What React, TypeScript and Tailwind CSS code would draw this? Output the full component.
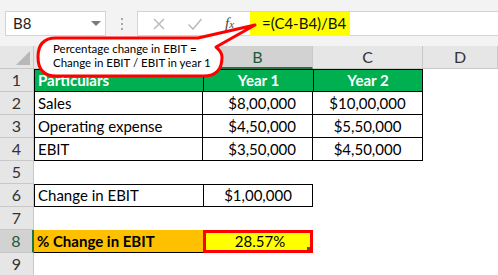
import React from "react";

const font = { fontFamily: "Lato, 'Open Sans', sans-serif" };

// column A's letter sits under the callout, so it is left blank
const cols = ["", "B", "C", "D"];

export default function App() {
  return (
    <div className="relative w-[498px] h-[275px] overflow-hidden bg-white text-black" style={font}>
      {/* formula bar */}
      <div className="flex h-[46px] items-center bg-[#f3f3f3] pl-[5px] pt-[1px]">
        <div className="flex h-[25px] w-[101px] items-center justify-between border border-[#d4d4d4] bg-white pl-[7px] pr-[4px] text-[15px] text-[#222]">
          <span>B8</span>
          <svg width="10" height="6" viewBox="0 0 10 6">
            <path d="M0 0 L10 0 L5 5 Z" fill="#7a7a7a" />
          </svg>
        </div>
        <div className="flex w-[31px] flex-col items-center gap-[3px]">
          <span className="h-[2px] w-[2px] bg-[#a8a8a8]" />
          <span className="h-[2px] w-[2px] bg-[#a8a8a8]" />
          <span className="h-[2px] w-[2px] bg-[#a8a8a8]" />
        </div>
        <div className="flex h-[25px] flex-1 items-center border border-r-0 border-[#d4d4d4] bg-white">
          <div className="flex w-[112px] items-center pl-[14px]">
            <svg width="14" height="14" viewBox="0 0 14 14" className="mr-[21px]">
              <path d="M2 2 L12 12 M12 2 L2 12" stroke="#bdbdbd" strokeWidth="1.6" />
            </svg>
            <svg width="16" height="14" viewBox="0 0 16 14" className="mr-[22px]">
              <path d="M1.5 7.5 L6 12 L14.5 2" stroke="#bdbdbd" strokeWidth="1.6" fill="none" />
            </svg>
            <span className="font-['Liberation_Serif',serif] text-[15px] italic text-[#444]">
              f<span className="text-[11px]">x</span>
            </span>
          </div>
          <div className="flex h-[24px] w-[100px] items-center bg-[#ffff00] pl-[12px] text-[15px] text-[#111]">
            =(C4-B4)/B4
          </div>
        </div>
      </div>

      {/* grid */}
      <div className="grid grid-cols-[34px_169px_110px_110px_1fr] grid-rows-[23px_repeat(9,23px)] text-[15px]">
        {/* header row */}
        <div className="relative border-b border-r border-[#c8c8c8] bg-[#e6e6e6]">
          <svg width="14" height="14" viewBox="0 0 14 14" className="absolute bottom-[3px] right-[3px]">
            <path d="M14 0 L14 14 L0 14 Z" fill="#b8b8b8" />
          </svg>
        </div>
        {cols.map((c, i) => (
          <div
            key={i}
            className={
              c === "B"
                ? "flex items-center justify-center border-b-2 border-r border-b-[#217346] border-r-[#c8c8c8] bg-[#d2d2d2] text-[16px] text-[#215a3a]"
                : "flex items-center justify-center border-b border-r border-[#c8c8c8] bg-[#e6e6e6] text-[16px] text-[#333]"
            }
          >
            {c}
          </div>
        ))}

        {/* row 1 */}
        <RowHead n={1} />
        <div className="flex items-center border border-r-0 border-black bg-[#00b050] pl-[3px] font-bold text-white">Particulars</div>
        <div className="flex items-center justify-center border border-r-0 border-black bg-[#00b050] font-bold text-white">Year 1</div>
        <div className="flex items-center justify-center border border-black bg-[#00b050] font-bold text-white">Year 2</div>
        <div />

        {/* rows 2-4 */}
        {[
          ["Sales", "$8,00,000", "$10,00,000"],
          ["Operating expense", "$4,50,000", "$5,50,000"],
          ["EBIT", "$3,50,000", "$4,50,000"],
        ].map((r, i) => (
          <React.Fragment key={r[0]}>
            <RowHead n={i + 2} />
            <div className="flex items-center border-b border-l border-r border-black pl-[3px]">{r[0]}</div>
            <div className="flex items-center justify-end border-b border-r border-black pr-[16px]">{r[1]}</div>
            <div className="flex items-center justify-center border-b border-r border-black">{r[2]}</div>
            <div />
          </React.Fragment>
        ))}

        {/* row 5 */}
        <RowHead n={5} />
        <div />
        <div />
        <div />
        <div />

        {/* row 6 */}
        <RowHead n={6} />
        <div className="flex items-center border border-r-0 border-black pl-[3px]">Change in EBIT</div>
        <div className="flex items-center justify-center border border-black">$1,00,000</div>
        <div />
        <div />

        {/* row 7 */}
        <RowHead n={7} />
        <div />
        <div />
        <div />
        <div />

        {/* row 8 */}
        <div className="flex items-center justify-center border-b border-r-2 border-b-[#c8c8c8] border-r-[#217346] bg-[#d2d2d2] text-[16px] text-[#215a3a]">8</div>
        <div className="flex items-center border-b border-black bg-[#ffc000] pl-[3px] font-bold">% Change in EBIT</div>
        <div className="relative flex items-center justify-center border-[3px] border-[#ff0000] bg-[#ffff00] pl-[4px]">
          28.57%
          <span className="absolute bottom-0 right-0 h-[3px] w-[3px] bg-[#217346]" />
        </div>
        <div />
        <div />

        {/* row 9 */}
        <RowHead n={9} />
        <div />
        <div />
        <div />
        <div />
      </div>

      {/* callout */}
      <svg className="absolute left-0 top-0" width="498" height="100" viewBox="0 0 498 100">
        <path
          d="M56 38 L198 38 L255 25 L216 47 Q222 52 222 57 Q222 76 204 76 L56 76 Q38 76 38 57 Q38 38 56 38 Z"
          fill="white"
          stroke="#ff0000"
          strokeWidth="3"
          strokeLinejoin="round"
        />
      </svg>
      <div className="absolute left-[53px] top-[42px] flex flex-col text-[11.5px] leading-[14px] text-black">
        <span>Percentage change in EBIT =</span>
        <span>Change in EBIT / EBIT in year 1</span>
      </div>
    </div>
  );
}

function RowHead({ n }: { n: number }) {
  return (
    <div className="flex items-center justify-center border-b border-r border-[#c8c8c8] bg-[#e6e6e6] text-[16px] text-[#333]">
      {n}
    </div>
  );
}
